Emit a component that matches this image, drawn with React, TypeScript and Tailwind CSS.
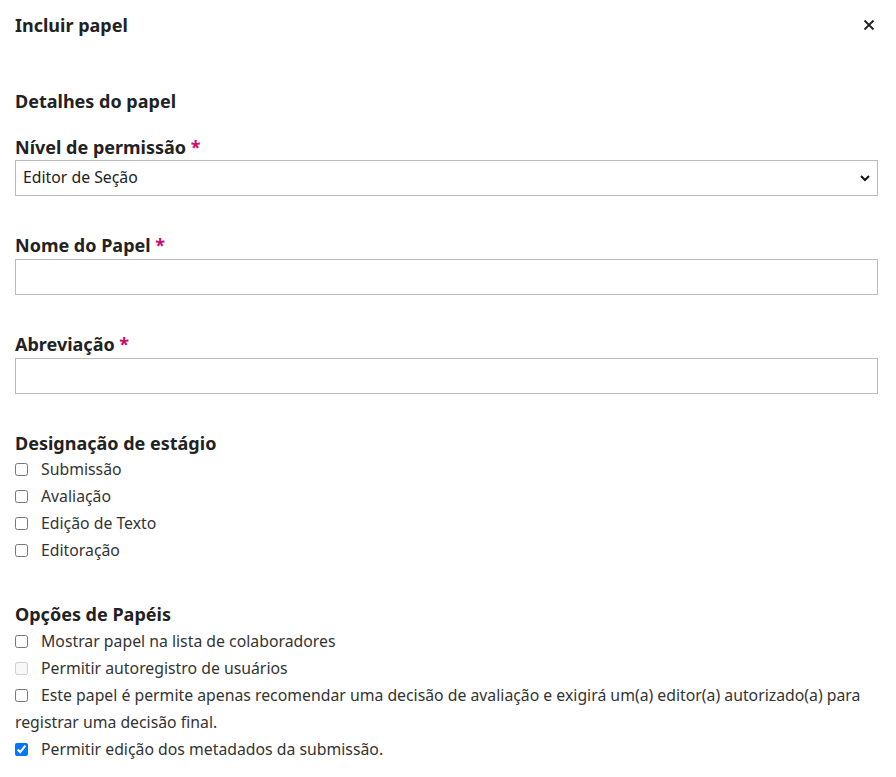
import React from 'react';

const font = { fontFamily: '"Noto Sans", "Open Sans", sans-serif' };

function Required() {
  return <span className="text-[#d00a6c]"> *</span>;
}

function CheckRow({ label, checked, disabled }: { label: string; checked?: boolean; disabled?: boolean }) {
  return (
    <label className="block text-[15.8px] leading-[27px] text-[#333]">
      <input
        type="checkbox"
        defaultChecked={checked}
        disabled={disabled}
        className="m-0 mr-[13px] h-[13px] w-[13px] align-[-1px] accent-[#0075ff]"
      />
      {label}
    </label>
  );
}

export default function App() {
  return (
    <div className="min-h-screen bg-white pl-[15px] pr-[18px] text-[#222]" style={font}>
      {/* Header */}
      <div className="flex items-center justify-between pt-[14px]">
        <h1 className="text-[18px] font-bold leading-[22px] text-[#222]">Incluir papel</h1>
        <button className="mr-[3px] text-[#222]" aria-label="Fechar">
          <svg width="12" height="12" viewBox="0 0 12 12" fill="none" stroke="currentColor" strokeWidth="1.8">
            <path d="M1.5 1.5l9 9M10.5 1.5l-9 9" />
          </svg>
        </button>
      </div>

      <h2 className="mt-[53px] text-[18px] font-bold leading-[24px]">Detalhes do papel</h2>

      {/* Nível de permissão */}
      <div className="mt-[22px]">
        <div className="text-[18px] font-bold leading-[24px]">
          Nível de permissão<Required />
        </div>
        <div className="relative mt-[1px]">
          <select className="h-[36px] w-full appearance-none border border-[#bbb] bg-white pl-[7px] text-[15.8px] text-[#222] outline-none">
            <option>Editor de Seção</option>
          </select>
          <svg
            className="pointer-events-none absolute right-[8px] top-1/2 -translate-y-1/2"
            width="10"
            height="7"
            viewBox="0 0 10 7"
            fill="none"
            stroke="#111"
            strokeWidth="2"
          >
            <path d="M1 1.5l4 4 4-4" />
          </svg>
        </div>
      </div>

      {/* Nome do Papel */}
      <div className="mt-[37px]">
        <div className="text-[18px] font-bold leading-[24px]">
          Nome do Papel<Required />
        </div>
        <input type="text" className="mt-[2px] block h-[36px] w-full border border-[#bbb] outline-none" />
      </div>

      {/* Abreviação */}
      <div className="mt-[37px]">
        <div className="text-[18px] font-bold leading-[24px]">
          Abreviação<Required />
        </div>
        <input type="text" className="mt-[2px] block h-[36px] w-full border border-[#bbb] outline-none" />
      </div>

      {/* Designação de estágio */}
      <div className="mt-[37px]">
        <div className="text-[18px] font-bold leading-[24px]">Designação de estágio</div>
        <div className="mt-[1px]">
          <CheckRow label="Submissão" />
          <CheckRow label="Avaliação" />
          <CheckRow label="Edição de Texto" />
          <CheckRow label="Editoração" />
        </div>
      </div>

      {/* Opções de Papéis */}
      <div className="mt-[38px]">
        <div className="text-[18px] font-bold leading-[24px]">Opções de Papéis</div>
        <div className="mt-[2px]">
          <CheckRow label="Mostrar papel na lista de colaboradores" />
          <CheckRow label="Permitir autoregistro de usuários" disabled />
          <CheckRow label="Este papel é permite apenas recomendar uma decisão de avaliação e exigirá um(a) editor(a) autorizado(a) para registrar uma decisão final." />
          <CheckRow label="Permitir edição dos metadados da submissão." checked />
        </div>
      </div>
    </div>
  );
}
